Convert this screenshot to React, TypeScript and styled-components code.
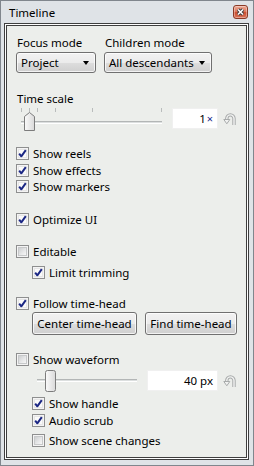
import React from 'react';
import styled, { createGlobalStyle } from 'styled-components';

const GlobalStyle = createGlobalStyle`
  html, body { margin: 0; padding: 0; background: #ffffff; }
  body {
    font-family: "Noto Sans", "Open Sans", sans-serif;
    font-size: 11.5px;
    color: #000;
  }
  * { box-sizing: border-box; }
`;

const Window = styled.div`
  width: 254px;
  height: 466px;
  display: flex;
  flex-direction: column;
  background: #dfe3e7;
  border: 1px solid #80868d;
  padding: 0 4px 5px 3px;
`;

const TitleBar = styled.div`
  height: 22px;
  flex: none;
  display: flex;
  align-items: center;
  justify-content: space-between;
  padding-left: 5px;
  padding-right: 1px;
`;

const Title = styled.span`
  font-size: 11.5px;
  line-height: 16px;
  padding-top: 2px;
`;

const CloseButton = styled.div`
  width: 15px;
  height: 14px;
  border: 1px solid #8a3a26;
  border-radius: 3px;
  background: linear-gradient(#eeab98 0%, #de7a5f 45%, #cc4f30 55%, #d8745a 100%);
  box-shadow: inset 0 0 0 1px rgba(255, 255, 255, 0.35);
  display: flex;
  align-items: center;
  justify-content: center;
`;

const Panel = styled.div`
  flex: 1;
  display: flex;
  flex-direction: column;
  background: #eceeeb;
  border: 1px solid #3e3e3e;
  box-shadow: inset 0 0 0 1px #ffffff, inset 0 0 0 2px #3e3e3e;
  padding: 11px 8px 0 11px;
`;

const ModeRow = styled.div`
  display: flex;
  gap: 8px;
`;

const Field = styled.div`
  display: flex;
  flex-direction: column;
  gap: 1px;
`;

const Label = styled.div<{ $gap?: number }>`
  height: 16px;
  line-height: 16px;
  padding-left: 1px;
  margin-top: ${(p) => p.$gap ?? 0}px;
  white-space: nowrap;
`;

const Select = styled.div<{ $width: number }>`
  width: ${(p) => p.$width}px;
  height: 21px;
  border: 1px solid #707070;
  border-radius: 3px;
  background: linear-gradient(#f2f2f2 0%, #ebebeb 50%, #dddddd 51%, #cfcfcf 100%);
  box-shadow: inset 0 0 0 1px rgba(255, 255, 255, 0.75);
  display: flex;
  align-items: center;
  justify-content: space-between;
  padding: 0 6px 0 4px;
  white-space: nowrap;
`;

const Arrow = styled.span`
  width: 0;
  height: 0;
  border-left: 3.5px solid transparent;
  border-right: 3.5px solid transparent;
  border-top: 4px solid #000;
`;

const SliderRow = styled.div<{ $gap: number; $indent?: number }>`
  display: flex;
  align-items: flex-start;
  height: 22px;
  margin-top: ${(p) => p.$gap}px;
  padding-left: ${(p) => p.$indent ?? 0}px;
`;

const Slider = styled.div<{ $width: number }>`
  position: relative;
  width: ${(p) => p.$width}px;
  height: 22px;
  padding-left: 5px;
  display: flex;
  flex-direction: column;
`;

const Ticks = styled.div<{ $show: boolean }>`
  position: relative;
  height: ${(p) => (p.$show ? 4 : 0)}px;
`;

const Tick = styled.span`
  position: absolute;
  top: 0;
  width: 1px;
  height: 4px;
  background: #b9bcbc;
`;

const Track = styled.div<{ $top: number }>`
  margin-top: ${(p) => p.$top}px;
  height: 3px;
  border-top: 1px solid #b3b6b6;
  border-bottom: 1px solid #ffffff;
  background: #dcdfdf;
`;

const Thumb = styled.svg`
  position: absolute;
  top: 0;
`;

const TextBox = styled.div<{ $width: number }>`
  width: ${(p) => p.$width}px;
  height: 21px;
  margin-left: 10px;
  background: #ffffff;
  border: 1px solid #f0f0f0;
  display: flex;
  align-items: center;
  justify-content: flex-end;
  padding-right: 4px;
  white-space: nowrap;
`;

const Unit = styled.span`
  color: #1b2a8c;
  font-size: 11px;
  margin-left: 1px;
`;

const ResetIcon = styled.svg`
  margin-left: 5px;
  margin-top: 4px;
  flex: none;
`;

const CheckRow = styled.div<{ $gap?: number; $indent?: number }>`
  display: flex;
  align-items: center;
  gap: 4px;
  height: 16.5px;
  margin-top: ${(p) => p.$gap ?? 0}px;
  padding-left: ${(p) => p.$indent ?? 0}px;
  white-space: nowrap;
`;

const Box = styled.span<{ $checked: boolean }>`
  position: relative;
  width: 13px;
  height: 13px;
  flex: none;
  border: 1px solid #8e8f8f;
  background: #f4f4f4;
  &::before {
    content: "";
    position: absolute;
    inset: 1px;
    border: 1px solid ${(p) => (p.$checked ? '#e6e6e6' : '#c7c9ca')};
    background: ${(p) =>
      p.$checked
        ? '#fafafa'
        : 'linear-gradient(135deg, #cdcfd0 0%, #e6e7e8 55%, #f7f7f7 100%)'};
  }
  svg {
    position: absolute;
    left: 0;
    top: 0;
  }
`;

const ButtonRow = styled.div`
  display: flex;
  gap: 8px;
  padding-left: 16px;
`;

const Button = styled.div<{ $width: number }>`
  width: ${(p) => p.$width}px;
  height: 23px;
  border: 1px solid #707070;
  border-radius: 3px;
  background: linear-gradient(#f2f2f2 0%, #ebebeb 50%, #dddddd 51%, #cfcfcf 100%);
  box-shadow: inset 0 0 0 1px rgba(255, 255, 255, 0.75);
  display: flex;
  align-items: center;
  justify-content: center;
  white-space: nowrap;
`;

function Check({ label, checked, gap, indent }: { label: string; checked: boolean; gap?: number; indent?: number }) {
  return (
    <CheckRow $gap={gap} $indent={indent}>
      <Box $checked={checked}>
        {checked && (
          <svg width="11" height="11" viewBox="0 0 11 11">
            <path d="M2.2 5.6 L4.3 8.3 L8.8 2.2" fill="none" stroke="#1b2784" strokeWidth="2" strokeLinejoin="round" />
          </svg>
        )}
      </Box>
      <span>{label}</span>
    </CheckRow>
  );
}

function Reset() {
  return (
    <ResetIcon width="14" height="14" viewBox="0 0 14 14">
      <path d="M11 13 V6.5 A3.6 3.6 0 0 0 3.8 6.5 V8" fill="none" stroke="#a8abab" strokeWidth="3.4" />
      <path d="M11 13 V6.5 A3.6 3.6 0 0 0 3.8 6.5 V8" fill="none" stroke="#f2f3f2" strokeWidth="1.4" />
      <path d="M0.8 7.5 H6.8 L3.8 11.8 Z" fill="#f2f3f2" stroke="#a8abab" strokeWidth="1" strokeLinejoin="round" />
    </ResetIcon>
  );
}

const scaleTicks = [0, 8, 16, 34, 70.5, 140];

export default function App() {
  return (
    <>
      <GlobalStyle />
      <Window>
        <TitleBar>
          <Title>Timeline</Title>
          <CloseButton>
            <svg width="9" height="8" viewBox="0 0 9 8">
              <path d="M2 1.5 L7 6.5 M7 1.5 L2 6.5" stroke="#3a3a3a" strokeWidth="3.2" />
              <path d="M2 1.5 L7 6.5 M7 1.5 L2 6.5" stroke="#ffffff" strokeWidth="1.6" />
            </svg>
          </CloseButton>
        </TitleBar>
        <Panel>
          <ModeRow>
            <Field>
              <Label>Focus mode</Label>
              <Select $width={80}>
                <span>Project</span>
                <Arrow />
              </Select>
            </Field>
            <Field>
              <Label>Children mode</Label>
              <Select $width={108}>
                <span>All descendants</span>
                <Arrow />
              </Select>
            </Field>
          </ModeRow>

          <Label $gap={18}>Time scale</Label>
          <SliderRow $gap={1}>
            <Slider $width={146}>
              <Ticks $show>
                {scaleTicks.map((x) => (
                  <Tick key={x} style={{ left: x }} />
                ))}
              </Ticks>
              <Track $top={9} />
              <Thumb width="11" height="19" viewBox="0 0 11 19" style={{ left: 8, top: 4 }}>
                <defs>
                  <linearGradient id="tg1" x1="0" x2="1" y1="0" y2="0">
                    <stop offset="0" stopColor="#fbfbfb" />
                    <stop offset="1" stopColor="#d9d9d9" />
                  </linearGradient>
                </defs>
                <path d="M0.5 18.5 V4.5 L5.5 0.5 L10.5 4.5 V18.5 Z" fill="url(#tg1)" stroke="#7c7c7c" strokeLinejoin="round" />
              </Thumb>
            </Slider>
            <TextBox $width={46}>
              1<Unit>×</Unit>
            </TextBox>
            <Reset />
          </SliderRow>

          <Check label="Show reels" checked gap={15.5} />
          <Check label="Show effects" checked />
          <Check label="Show markers" checked />

          <Check label="Optimize UI" checked gap={16} />

          <Check label="Editable" checked={false} gap={16} />
          <Check label="Limit trimming" checked gap={4} indent={16} />

          <Check label="Follow time-head" checked gap={15} />
          <ButtonRow>
            <Button $width={105}>Center time-head</Button>
            <Button $width={92}>Find time-head</Button>
          </ButtonRow>

          <Check label="Show waveform" checked={false} gap={16} />
          <SliderRow $gap={2.5} $indent={16}>
            <Slider $width={105}>
              <Ticks $show={false} />
              <Track $top={9} />
              <Thumb width="11" height="22" viewBox="0 0 11 22" style={{ left: 13 }}>
                <defs>
                  <linearGradient id="tg2" x1="0" x2="1" y1="0" y2="0">
                    <stop offset="0" stopColor="#fbfbfb" />
                    <stop offset="1" stopColor="#d9d9d9" />
                  </linearGradient>
                </defs>
                <rect x="0.5" y="0.5" width="10" height="21" rx="2" fill="url(#tg2)" stroke="#7c7c7c" />
              </Thumb>
            </Slider>
            <TextBox $width={71}>40 px</TextBox>
            <Reset />
          </SliderRow>

          <Check label="Show handle" checked gap={3.5} indent={16} />
          <Check label="Audio scrub" checked indent={16} />
          <Check label="Show scene changes" checked={false} gap={3.5} indent={16} />
        </Panel>
      </Window>
    </>
  );
}
